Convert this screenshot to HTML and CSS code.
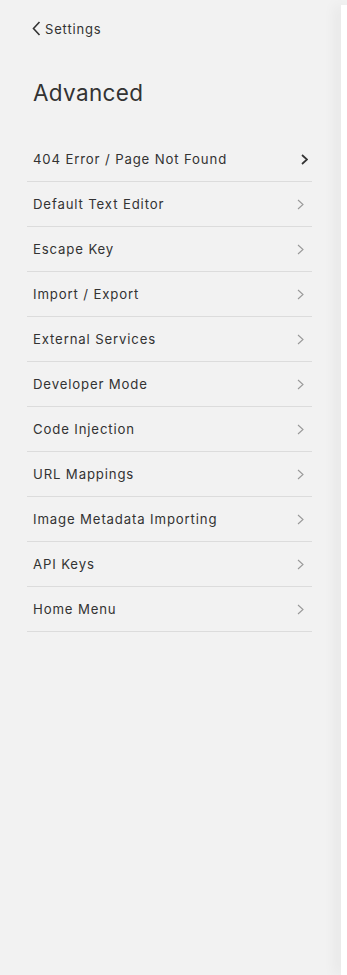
FILE: index.html
```html
<!DOCTYPE html>
<html>
<head>
  <title>Advanced</title>
  <link rel="stylesheet" href="styles.css">
</head>
<body>
  <div class="layout">
    <div class="panel">
      <a href="#" class="back">
        <svg width="9" height="15" viewBox="0 0 9 15"><polyline points="7.5,1 1.5,7.5 7.5,14" fill="none" stroke="#333" stroke-width="1.6"/></svg>
        <span>Settings</span>
      </a>

      <h1>Advanced</h1>

      <ul class="menu">
        <li class="active"><span>404 Error / Page Not Found</span><svg class="chev" width="7" height="11" viewBox="0 0 7 11"><polyline points="1,1 6,5.5 1,10" fill="none" stroke-width="1.7"/></svg></li>
        <li><span>Default Text Editor</span><svg class="chev" width="7" height="11" viewBox="0 0 7 11"><polyline points="1,1 6,5.5 1,10" fill="none" stroke-width="1.1"/></svg></li>
        <li><span>Escape Key</span><svg class="chev" width="7" height="11" viewBox="0 0 7 11"><polyline points="1,1 6,5.5 1,10" fill="none" stroke-width="1.1"/></svg></li>
        <li><span>Import / Export</span><svg class="chev" width="7" height="11" viewBox="0 0 7 11"><polyline points="1,1 6,5.5 1,10" fill="none" stroke-width="1.1"/></svg></li>
        <li><span>External Services</span><svg class="chev" width="7" height="11" viewBox="0 0 7 11"><polyline points="1,1 6,5.5 1,10" fill="none" stroke-width="1.1"/></svg></li>
        <li><span>Developer Mode</span><svg class="chev" width="7" height="11" viewBox="0 0 7 11"><polyline points="1,1 6,5.5 1,10" fill="none" stroke-width="1.1"/></svg></li>
        <li><span>Code Injection</span><svg class="chev" width="7" height="11" viewBox="0 0 7 11"><polyline points="1,1 6,5.5 1,10" fill="none" stroke-width="1.1"/></svg></li>
        <li><span>URL Mappings</span><svg class="chev" width="7" height="11" viewBox="0 0 7 11"><polyline points="1,1 6,5.5 1,10" fill="none" stroke-width="1.1"/></svg></li>
        <li><span>Image Metadata Importing</span><svg class="chev" width="7" height="11" viewBox="0 0 7 11"><polyline points="1,1 6,5.5 1,10" fill="none" stroke-width="1.1"/></svg></li>
        <li><span>API Keys</span><svg class="chev" width="7" height="11" viewBox="0 0 7 11"><polyline points="1,1 6,5.5 1,10" fill="none" stroke-width="1.1"/></svg></li>
        <li><span>Home Menu</span><svg class="chev" width="7" height="11" viewBox="0 0 7 11"><polyline points="1,1 6,5.5 1,10" fill="none" stroke-width="1.1"/></svg></li>
      </ul>
    </div>

    <div class="preview"></div>
  </div>
</body>
</html>
```

FILE: styles.css
```css
body {
  margin: 0;
  padding: 0;
  background-color: #f2f2f2;
  font-family: Inter, "Open Sans", sans-serif;
  color: #333;
}

.layout {
  display: flex;
  height: 975px;
  overflow: hidden;
}

.panel {
  width: 341px;
  flex: none;
  box-sizing: border-box;
  padding: 0 29px 0 27px;
}

.back {
  display: flex;
  align-items: center;
  gap: 4px;
  margin: 21px 0 0 5px;
  height: 15px;
  color: #333;
  text-decoration: none;
  font-size: 13px;
  letter-spacing: 0.85px;
}

.back svg {
  display: block;
}

h1 {
  margin: 42px 0 0 6px;
  height: 30px;
  line-height: 30px;
  font-size: 22.5px;
  font-weight: 400;
  letter-spacing: 0.35px;
  color: #333;
}

.menu {
  list-style: none;
  margin: 29px 0 0;
  padding: 0;
}

.menu li {
  display: flex;
  align-items: center;
  justify-content: space-between;
  height: 45px;
  box-sizing: border-box;
  padding: 0 8px 0 6px;
  border-bottom: 1px solid #dcdcdc;
  font-size: 13.2px;
  letter-spacing: 0.85px;
  cursor: pointer;
}

.menu li .chev {
  display: block;
  stroke: #999;
  margin-top: 1px;
}

.menu li.active {
  padding-right: 4px;
}

.menu li.active .chev {
  stroke: #333;
}

.preview {
  flex: 1;
  margin-top: 5px;
  background-color: #fff;
  box-shadow: -4px 0 14px rgba(0, 0, 0, 0.09);
}
```
